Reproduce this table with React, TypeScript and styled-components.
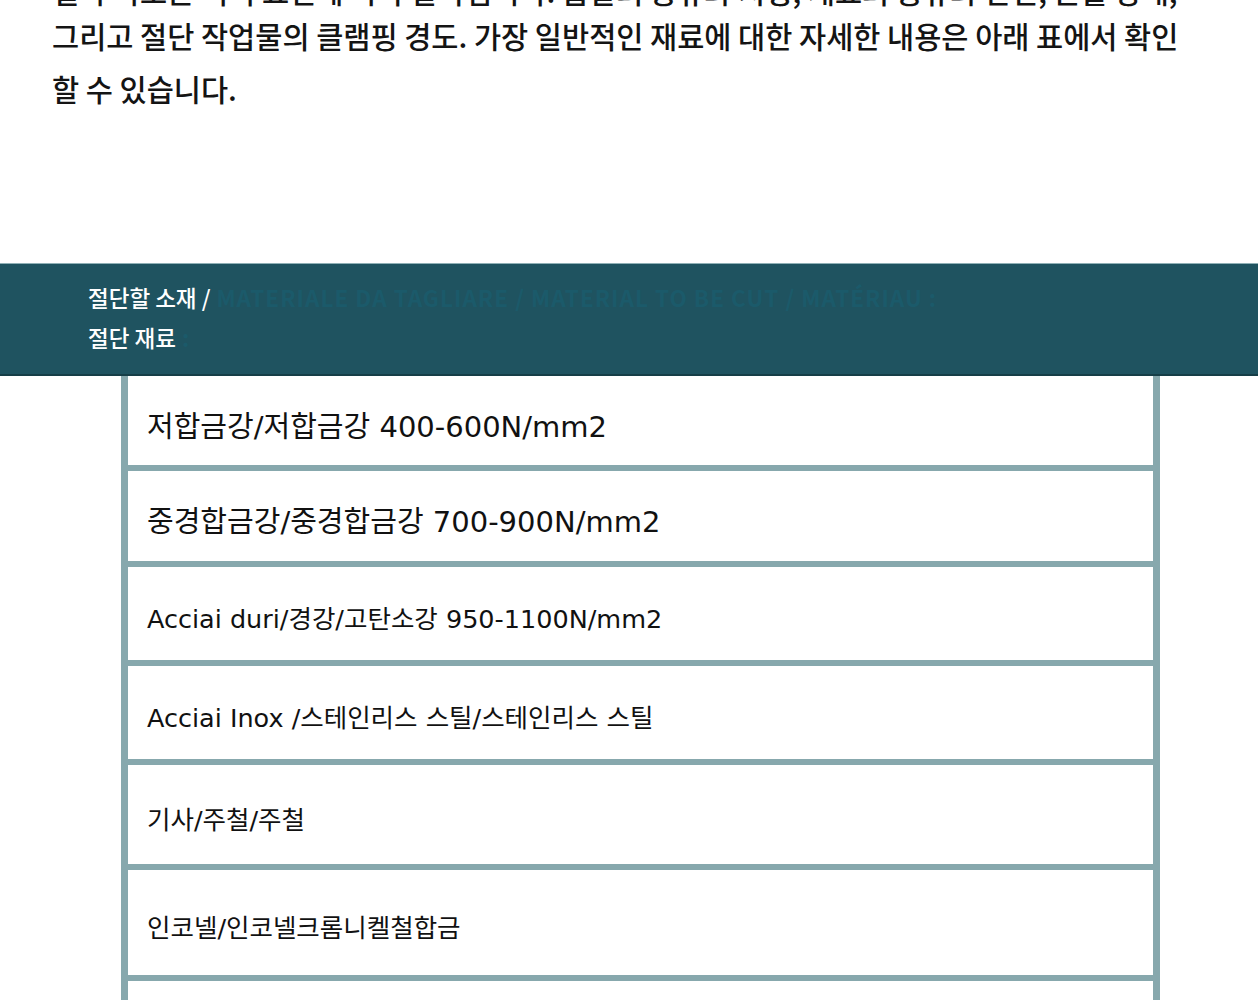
import styled, { createGlobalStyle } from "styled-components";

const GlobalStyle = createGlobalStyle`
	body {
		margin: 0;
		background: #ffffff;
		font-family: "Noto Sans CJK KR", "Noto Sans", sans-serif;
		color: #111111;
		overflow: hidden;
	}
`;

const Page = styled.div`
	width: 1258px;
	height: 1000px;
	overflow: hidden;
`;

const Intro = styled.div`
	margin: -28px 0 0;
	padding: 0 0 0 52px;
	font-size: 29.5px;
	font-weight: 500;
	white-space: nowrap;
	color: #141414;
`;

const IntroLine = styled.div<{ $lh: number }>`
	line-height: ${(p) => p.$lh}px;
`;

const Band = styled.div`
	margin-top: 148px;
	height: 113px;
	box-sizing: border-box;
	background: #1f5360;
	border-top: 1px solid #8fb0b6;
	border-bottom: 2px solid #163e47;
	padding: 13px 0 0 88px;
`;

const BandLine = styled.div`
	display: flex;
	align-items: baseline;
	gap: 6px;
	font-size: 22.5px;
	line-height: 40px;
	font-weight: 500;
	color: #ffffff;
	white-space: nowrap;
`;

const Ghost = styled.span`
	color: #1b5a6a;
	font-weight: 700;
	letter-spacing: 1px;
`;

const Table = styled.div`
	margin: 0 98px 0 121px;
	border-left: 7px solid #87a8ad;
	border-right: 7px solid #87a8ad;
	display: flex;
	flex-direction: column;
`;

const Row = styled.div<{ $h: number; $big?: boolean }>`
	height: ${(p) => p.$h}px;
	display: flex;
	align-items: center;
	padding: 6px 0 0 19px;
	box-sizing: border-box;
	border-bottom: 6px solid #87a8ad;
	background: #ffffff;
	font-family: "DejaVu Sans", "Noto Sans CJK KR", sans-serif;
	font-size: ${(p) => (p.$big ? 29 : 25.5)}px;
	color: #111111;
	white-space: nowrap;
`;

const rows = [
	{ text: "저합금강/저합금강 400-600N/mm2", h: 95, big: true },
	{ text: "중경합금강/중경합금강 700-900N/mm2", h: 96, big: true },
	{ text: "Acciai duri/경강/고탄소강 950-1100N/mm2", h: 99 },
	{ text: "Acciai Inox /스테인리스 스틸/스테인리스 스틸", h: 99 },
	{ text: "기사/주철/주철", h: 105 },
	{ text: "인코넬/인코넬크롬니켈철합금", h: 111 },
	{ text: "", h: 100 },
];

export default function App() {
	return (
		<Page>
			<GlobalStyle />
			<Intro>
				<IntroLine $lh={37}>
					절삭 속도는 여러 요인에 따라 달라집니다: 톱날의 종류와 치형, 재료의 종류와 단면, 윤활 상태,
				</IntroLine>
				<IntroLine $lh={53}>
					그리고 절단 작업물의 클램핑 경도. 가장 일반적인 재료에 대한 자세한 내용은 아래 표에서 확인
				</IntroLine>
				<IntroLine $lh={53}>할 수 있습니다.</IntroLine>
			</Intro>
			<Band>
				<BandLine>
					절단할 소재 /<Ghost>MATERIALE DA TAGLIARE / MATERIAL TO BE CUT / MATÉRIAU :</Ghost>
				</BandLine>
				<BandLine>
					절단 재료<Ghost>:</Ghost>
				</BandLine>
			</Band>
			<Table>
				{rows.map((r, i) => (
					<Row key={i} $h={r.h} $big={r.big}>
						{r.text}
					</Row>
				))}
			</Table>
		</Page>
	);
}
